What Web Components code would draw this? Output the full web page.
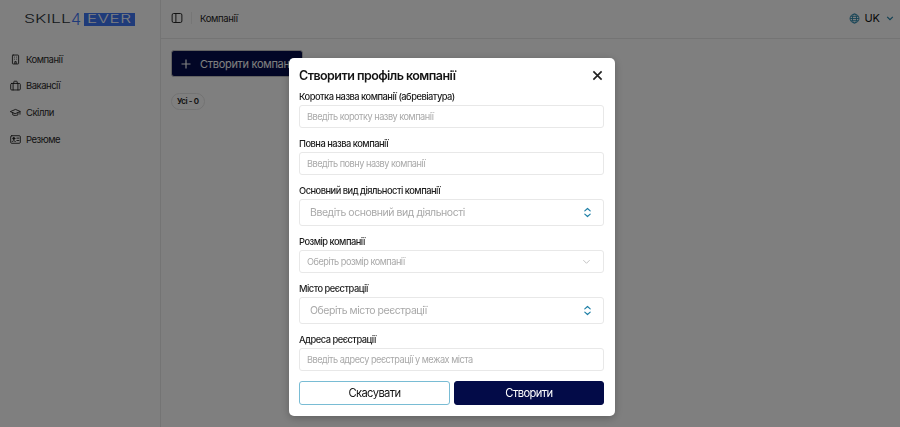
<!DOCTYPE html>
<html lang="uk">
<head>
<meta charset="utf-8">
<title>Компанії</title>
<style>
  html, body { margin: 0; height: 100%; overflow: hidden; }
  body { font-family: Inter, "Liberation Sans", sans-serif; color: #1a1a1a; background: #fff; }
</style>
</head>
<body>
<app-shell>
  <side-bar slot="side">
    <nav-item icon="building">Компанії</nav-item>
    <nav-item icon="case">Вакансії</nav-item>
    <nav-item icon="cap">Скілли</nav-item>
    <nav-item icon="card">Резюме</nav-item>
  </side-bar>
  <top-bar slot="top" title="Компанії"></top-bar>
  <company-list></company-list>
</app-shell>

<modal-layer>
  <company-form>
    <form-field label="Коротка назва компанії (абревіатура)"><text-box placeholder="Введіть коротку назву компанії"></text-box></form-field>
    <form-field label="Повна назва компанії"><text-box placeholder="Введіть повну назву компанії"></text-box></form-field>
    <form-field label="Основний вид діяльності компанії"><combo-box placeholder="Введіть основний вид діяльності"></combo-box></form-field>
    <form-field label="Розмір компанії"><text-box placeholder="Оберіть розмір компанії" chevron></text-box></form-field>
    <form-field label="Місто реєстрації"><combo-box placeholder="Оберіть місто реєстрації"></combo-box></form-field>
    <form-field label="Адреса реєстрації"><text-box placeholder="Введіть адресу реєстрації у межах міста"></text-box></form-field>
  </company-form>
</modal-layer>

<script>
const ICONS = {
  building: '<rect x="3.500" y="1.500" width="9" height="13" rx="1"/><path d="M6.300 4.500h.01M9.700 4.500h.01M6.300 7.500h.01M9.700 7.500h.01M7 14v-3h2v3"/>',
  case: '<rect x="1" y="5" width="14" height="9.500" rx="1.500"/><path d="M5.500 5V2.800a1 1 0 0 1 1-1h3a1 1 0 0 1 1 1V5M4.500 5v9.500M11.500 5v9.500"/>',
  cap: '<path d="M1 6.500 8 3.500l7 3-7 3z"/><path d="M4 8.200v3.300c1.200 1 6 1 7.500 0V8.200M14.500 7v3.500"/>',
  card: '<rect x="1" y="2.500" width="14" height="11" rx="1.500"/><circle cx="5.500" cy="6.500" r="1.500" fill="#222"/><path d="M3 11c.4-1.800 4.600-1.800 5 0M10 6h3M10 9.500h3"/>'
};

class AppShell extends HTMLElement {
  constructor() {
    super();
    this.attachShadow({ mode: 'open' }).innerHTML = `
      <style>
        :host { display: grid; grid-template-columns: 161px 1fr; height: 100vh; }
        .main { display: flex; flex-direction: column; min-width: 0; }
      </style>
      <slot name="side"></slot>
      <div class="main"><slot name="top"></slot><slot></slot></div>`;
  }
}

class SideBar extends HTMLElement {
  constructor() {
    super();
    this.attachShadow({ mode: 'open' }).innerHTML = `
      <style>
        :host { display: block; border-right: 1px solid #e9e9e9; box-sizing: border-box; }
        .logo { display: flex; align-items: center; height: 39px; padding-left: 24px; }
        .word, .box span { display: block; font-size: 11px; font-weight: 300; line-height: 13px; transform-origin: left center; white-space: nowrap; }
        .word { width: 47px; color: #2b3238; transform: scaleX(1.6); }
        .four { width: 13px; font-size: 16px; line-height: 13px; font-weight: 300; color: #3f76f5; }
        .box { width: 51px; height: 13px; padding-left: 3px; box-sizing: border-box; background: #3f76f5; color: #fff; }
        .box span { transform: scaleX(1.55); letter-spacing: .3px; }
        nav { display: flex; flex-direction: column; gap: 8.700px; padding: 11px 0 0 10px; }
      </style>
      <div class="logo"><span class="word">SKILL</span><span class="four">4</span><div class="box"><span>EVER</span></div></div>
      <nav><slot></slot></nav>`;
  }
}

class NavItem extends HTMLElement {
  constructor() {
    super();
    const icon = ICONS[this.getAttribute('icon')];
    this.attachShadow({ mode: 'open' }).innerHTML = `
      <style>
        :host { display: flex; align-items: center; gap: 5px; height: 18px; font-size: 9.500px; font-weight: 400; letter-spacing: -.5px; color: #2a2a2a; }
        svg { width: 11px; height: 11px; fill: none; stroke: #222; stroke-width: 1.300; stroke-linecap: round; stroke-linejoin: round; }
      </style>
      <svg viewBox="0 0 16 16">${icon}</svg><slot></slot>`;
  }
}

class TopBar extends HTMLElement {
  constructor() {
    super();
    this.attachShadow({ mode: 'open' }).innerHTML = `
      <style>
        :host { display: flex; align-items: center; height: 36px; padding: 0 6px 2px 10px; border-bottom: 1px solid #e9e9e9; font-size: 9.500px; font-weight: 400; letter-spacing: -.35px; color: #222; }
        .toggle { width: 12px; height: 12px; fill: none; stroke: #222; stroke-width: 1.300; }
        .sep { width: 1px; height: 12px; background: #ececec; margin: 0 8px; }
        .lang { margin-left: auto; display: flex; align-items: center; gap: 4px; font-size: 11px; letter-spacing: 0; color: #111; }
        .globe { width: 11px; height: 11px; fill: none; stroke: #1d7fa6; stroke-width: 1.200; }
        .chev { width: 8px; height: 8px; margin-left: 2px; fill: none; stroke: #1d7fa6; stroke-width: 1.500; }
      </style>
      <svg class="toggle" viewBox="0 0 16 16"><rect x="1.500" y="2" width="13" height="12" rx="2"/><path d="M6.500 2v12"/></svg>
      <span class="sep"></span>
      <span>${this.getAttribute('title')}</span>
      <div class="lang">
        <svg class="globe" viewBox="0 0 16 16"><circle cx="8" cy="8" r="6.500"/><ellipse cx="8" cy="8" rx="3" ry="6.500"/><path d="M1.500 8h13M2.500 4.800h11M2.500 11.200h11"/></svg>
        <span>UK</span>
        <svg class="chev" viewBox="0 0 10 10"><path d="M1.500 3.500 5 7l3.500-3.500"/></svg>
      </div>`;
  }
}

class CompanyList extends HTMLElement {
  constructor() {
    super();
    this.attachShadow({ mode: 'open' }).innerHTML = `
      <style>
        :host { display: flex; flex-direction: column; align-items: flex-start; gap: 16px; padding: 11px 10px; }
        button { display: flex; align-items: center; gap: 9px; width: 132px; height: 27px; padding: 0 0 0 9px; box-sizing: border-box; background: #050d4c; color: #fff; border: 1px solid #c4c4c4; border-radius: 3px; font: 400 11px Inter, "Liberation Sans", sans-serif; letter-spacing: -.3px; white-space: nowrap; }
        svg { flex: none; width: 10px; height: 10px; stroke: #fff; stroke-width: 1.200; fill: none; }
        .chip { height: 17px; padding: 0 5px; border: 1px solid #e6e6e6; border-radius: 9px; font-size: 8px; font-weight: 600; letter-spacing: -.4px; color: #222; box-sizing: border-box; line-height: 15px; }
      </style>
      <button><svg viewBox="0 0 10 10"><path d="M5 .5v9M.5 5h9"/></svg>Створити компанію</button>
      <span class="chip">Усі - 0</span>`;
  }
}

class ModalLayer extends HTMLElement {
  constructor() {
    super();
    this.attachShadow({ mode: 'open' }).innerHTML = `
      <style>
        /* dimmed page under the dialog */
        :host { position: fixed; inset: 0; display: flex; justify-content: center; align-items: flex-start; padding: 58px 0 0 4px; box-sizing: border-box; background: rgba(0,0,0,.5); }
      </style>
      <slot></slot>`;
  }
}

class CompanyForm extends HTMLElement {
  constructor() {
    super();
    this.attachShadow({ mode: 'open' }).innerHTML = `
      <style>
        :host { display: flex; flex-direction: column; width: 326px; height: 358px; padding: 9px 11px 11px 10px; box-sizing: border-box; background: #fff; border-radius: 5px; box-shadow: 0 2px 8px rgba(0,0,0,.25); color: #141414; }
        header { display: flex; align-items: center; justify-content: space-between; height: 17px; margin-bottom: 6px; }
        h2 { margin: 0; font-size: 12.500px; font-weight: 600; letter-spacing: -.55px; line-height: 17px; white-space: nowrap; }
        .close { width: 11px; height: 11px; margin-right: 1px; stroke: #222; stroke-width: 1.800; fill: none; }
        .fields { display: flex; flex-direction: column; }
        footer { display: grid; grid-template-columns: 151px 150px; gap: 4px; margin-top: 10px; }
        button { height: 24px; border-radius: 3px; font: 400 11.200px Inter, "Liberation Sans", sans-serif; letter-spacing: -.6px; box-sizing: border-box; padding: 0; }
        .cancel { background: #fff; border: 1px solid #79bcd4; color: #141414; }
        .save { background: #030b48; border: 1px solid #030b48; color: #fff; }
      </style>
      <header>
        <h2>Створити профіль компанії</h2>
        <svg class="close" viewBox="0 0 12 12"><path d="M1.500 1.500l9 9M10.500 1.500l-9 9"/></svg>
      </header>
      <div class="fields"><slot></slot></div>
      <footer><button class="cancel">Скасувати</button><button class="save">Створити</button></footer>`;
  }
}

class FormField extends HTMLElement {
  constructor() {
    super();
    this.attachShadow({ mode: 'open' }).innerHTML = `
      <style>
        :host { display: flex; flex-direction: column; gap: 2px; margin-bottom: 9px; }
        :host(:last-child) { margin-bottom: 0; }
        label { font-size: 9.300px; font-weight: 500; letter-spacing: -.5px; line-height: 13px; color: #1c1c1c; white-space: nowrap; }
      </style>
      <label>${this.getAttribute('label')}</label>
      <slot></slot>`;
  }
}

class TextBox extends HTMLElement {
  constructor() {
    super();
    const chevron = this.hasAttribute('chevron')
      ? '<svg viewBox="0 0 10 10"><path d="M1.500 3.500 5 7l3.500-3.500"/></svg>' : '';
    this.attachShadow({ mode: 'open' }).innerHTML = `
      <style>
        :host { display: flex; align-items: center; justify-content: space-between; height: 23px; padding: 0 12px 0 7px; box-sizing: border-box; border: 1px solid #e8e8e8; border-radius: 3px; font-size: 9.200px; letter-spacing: -.5px; color: #a9a9a9; white-space: nowrap; }
        svg { width: 9px; height: 9px; fill: none; stroke: #bdbdbd; stroke-width: 1; }
      </style>
      <span>${this.getAttribute('placeholder')}</span>${chevron}`;
  }
}

class ComboBox extends HTMLElement {
  constructor() {
    super();
    this.attachShadow({ mode: 'open' }).innerHTML = `
      <style>
        :host { display: flex; align-items: center; justify-content: space-between; height: 27px; padding: 0 11px 0 10px; box-sizing: border-box; border: 1px solid #e8e8e8; border-radius: 3px; font-size: 10.500px; letter-spacing: -.45px; color: #a9a9a9; white-space: nowrap; }
        svg { width: 9px; height: 11px; fill: none; stroke: #1d7fa6; stroke-width: 1.300; stroke-linecap: round; stroke-linejoin: round; }
      </style>
      <span>${this.getAttribute('placeholder')}</span>
      <svg viewBox="0 0 10 12"><path d="M2 4.200 5 1.500l3 2.700M2 7.800l3 2.700 3-2.700"/></svg>`;
  }
}

customElements.define('nav-item', NavItem);
customElements.define('side-bar', SideBar);
customElements.define('top-bar', TopBar);
customElements.define('company-list', CompanyList);
customElements.define('text-box', TextBox);
customElements.define('combo-box', ComboBox);
customElements.define('form-field', FormField);
customElements.define('company-form', CompanyForm);
customElements.define('modal-layer', ModalLayer);
customElements.define('app-shell', AppShell);
</script>
</body>
</html>
